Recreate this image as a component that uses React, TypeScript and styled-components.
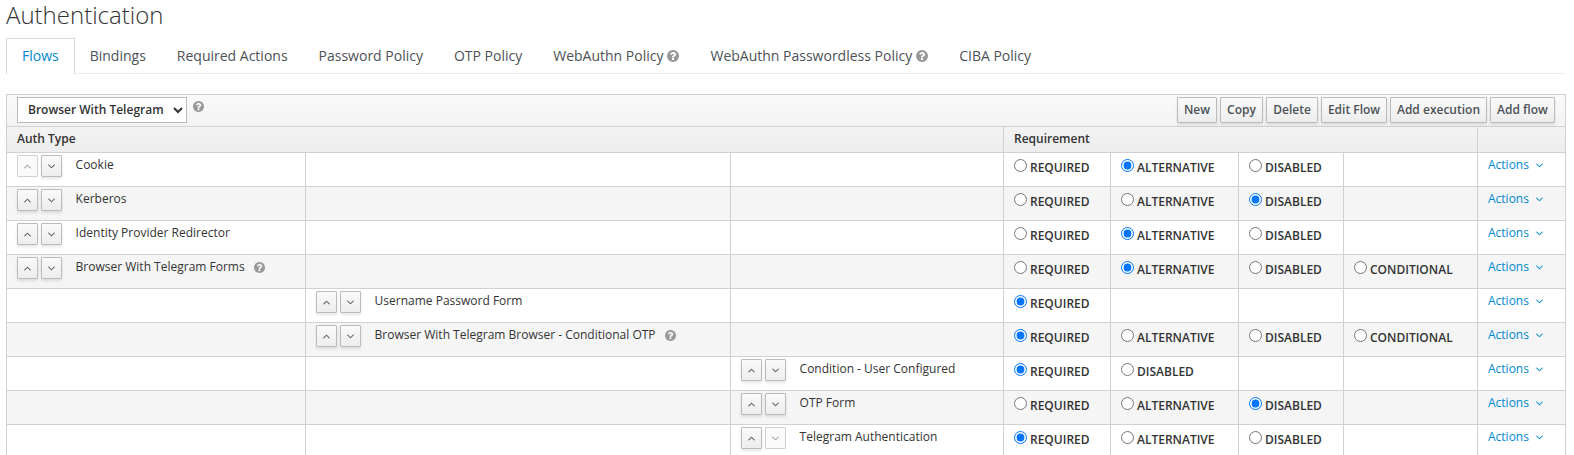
import React from 'react';
import styled, { createGlobalStyle } from 'styled-components';

const GlobalStyle = createGlobalStyle`
  *, *::before, *::after { box-sizing: border-box; }
  html, body { margin: 0; height: 100%; overflow: hidden; background: #fff; }
  body {
    font-family: 'Open Sans', Helvetica, Arial, sans-serif;
    font-size: 12px;
    line-height: 20px;
    color: #333;
  }
`;

const Page = styled.main`
  width: 1560px;
  margin-left: 6px;
`;

const Title = styled.h1`
  margin: 0;
  padding-top: 2px;
  height: 38px;
  font-size: 24px;
  line-height: 26px;
  font-weight: 300;
`;

const Tabs = styled.ul`
  display: flex;
  height: 36px;
  margin: 0 0 20px;
  padding: 0;
  list-style: none;
  border-bottom: 1px solid #ededed;
`;

const Tab = styled.li<{ $active?: boolean }>`
  display: flex;
  align-items: center;
  gap: 4px;
  height: 36px;
  padding: 0 15px 1px;
  font-size: 14px;
  white-space: nowrap;
  color: ${p => (p.$active ? '#0088ce' : '#4d5258')};
  background: ${p => (p.$active ? '#fff' : 'transparent')};
  border: 1px solid ${p => (p.$active ? '#d9d9d9' : 'transparent')};
  border-bottom: 0;

  & + & { margin-left: -1px; }
`;

const HelpSvg = styled.svg<{ $size: number }>`
  flex: none;
  width: ${p => p.$size}px;
  height: ${p => p.$size}px;
  fill: #999;
`;

const HelpIcon = ({ size }: { size: number }) => (
  <HelpSvg $size={size} viewBox="128 128 1536 1536">
    <path d="M1024 1376v-192q0-14-9-23t-23-9h-192q-14 0-23 9t-9 23v192q0 14 9 23t23 9h192q14 0 23-9t9-23zM1280 704q0-88-55.5-163t-138.5-116-170-41q-243 0-371 213-15 24 8 42l132 100q7 6 19 6 16 0 25-12 53-68 86-92 34-24 86-24 48 0 85.5 26t37.5 59q0 38-20 61t-68 45q-63 28-115.5 86.5t-52.5 125.5v36q0 14 9 23t23 9h192q14 0 23-9t9-23q0-19 21.5-49.5t54.5-49.5q32-18 49-28.5t46-35 44.5-48 28-60.5 12.5-81zM1664 896q0 209-103 385.5t-279.5 279.5-385.5 103-385.5-103-279.5-279.5-103-385.5 103-385.5 279.5-279.5 385.5-103 385.5 103 279.5 279.5 103 385.5z" />
  </HelpSvg>
);

const Table = styled.table`
  width: 1560px;
  table-layout: fixed;
  border-collapse: collapse;
  border: 1px solid #d1d1d1;
`;

const Head = styled.thead`
  background: linear-gradient(to bottom, #fafafa 0%, #ededed 100%);
`;

const HeadCell = styled.th`
  height: 26px;
  padding: 0 10px 1px;
  text-align: left;
  font-weight: 600;
  border: 1px solid #d1d1d1;
`;

const ToolbarCell = styled(HeadCell)`
  height: 32px;
  padding: 2px 10px 3px;
`;

const Toolbar = styled.div`
  display: flex;
  justify-content: space-between;
`;

const FlowPicker = styled.div`
  display: flex;
  gap: 6px;
  align-items: flex-start;

  svg { margin-top: 4px; }
`;

const Select = styled.select`
  width: 170px;
  height: 26px;
  padding: 1px 0 3px 6px;
  font: 600 12px/20px 'Open Sans', sans-serif;
  color: #333;
  background: #fff;
  border: 1px solid #bbb;
  border-radius: 0;
`;

const ButtonGroup = styled.div`
  display: flex;
  gap: 3px;
`;

const Button = styled.button<{ $width: number }>`
  width: ${p => p.$width}px;
  height: 26px;
  padding: 0 0 1px;
  font: 600 12px/20px 'Open Sans', sans-serif;
  white-space: nowrap;
  color: #4d5258;
  background: linear-gradient(to bottom, #fafafa 0%, #ededed 100%);
  border: 1px solid #bbb;
  border-radius: 1px;
  box-shadow: 0 2px 3px rgba(3, 3, 3, 0.1);
`;

const Row = styled.tr`
  height: 34px;
  &:nth-child(even) { background: #f5f5f5; }
`;

const Cell = styled.td`
  height: 34px;
  padding: 2px 10px 0;
  vertical-align: top;
  border: 1px solid #d1d1d1;
`;

const Entry = styled.div`
  display: flex;
  align-items: flex-start;
  white-space: nowrap;
`;

const MoveButton = styled.button`
  display: flex;
  align-items: center;
  justify-content: center;
  width: 21px;
  height: 22px;
  margin-right: 3.3px;
  padding: 0;
  color: #4d5258;
  background: linear-gradient(to bottom, #fafafa 0%, #ededed 100%);
  border: 1px solid #bbb;
  border-radius: 1px;
  box-shadow: 0 2px 3px rgba(3, 3, 3, 0.1);

  &:disabled {
    color: #999ca0;
    background: #fafafa;
    border-color: #d1d1d1;
    box-shadow: none;
  }
`;

const EntryName = styled.span`
  margin: 0 9.5px 0 10px;
`;

const EntryHelp = styled.span`
  display: flex;
  padding-top: 5px;
`;

const Option = styled.label`
  display: flex;
  align-items: flex-start;
  gap: 3px;
  height: 24px;
  font-weight: 600;
  white-space: nowrap;
`;

const Radio = styled.input`
  flex: none;
  width: 13px;
  height: 13px;
  margin: 4px 0 0;
`;

const OptionText = styled.span`
  padding-top: 3px;
`;

const ActionsLink = styled.a`
  display: flex;
  align-items: center;
  gap: 7.5px;
  color: #0088ce;
`;

const Chevron = ({ up }: { up?: boolean }) => (
  <svg width="7" height="5" viewBox="373.5 582 1045 747" fill="currentColor">
    <path
      transform={up ? 'rotate(180 896 955.5)' : undefined}
      d="M1395 736q0 13-10 23l-466 466q-10 10-23 10t-23-10l-466-466q-10-10-10-23t10-23l50-50q10-10 23-10t23 10l393 393 393-393q10-10 23-10t23 10l50 50q10 10 10 23z"
    />
  </svg>
);

const tabs = [
  { label: 'Flows', active: true },
  { label: 'Bindings' },
  { label: 'Required Actions' },
  { label: 'Password Policy' },
  { label: 'OTP Policy' },
  { label: 'WebAuthn Policy', help: true },
  { label: 'WebAuthn Passwordless Policy', help: true },
  { label: 'CIBA Policy' },
];

const toolbarButtons: [string, number][] = [
  ['New', 40],
  ['Copy', 43],
  ['Delete', 52],
  ['Edit Flow', 66],
  ['Add execution', 97],
  ['Add flow', 65],
];

const columnWidths = [299, 425, 273, 107, 128, 105, 134, 88];

const BASE = ['REQUIRED', 'ALTERNATIVE', 'DISABLED'];
const WITH_CONDITIONAL = [...BASE, 'CONDITIONAL'];

interface Execution {
  name: string;
  level: number;
  options: string[];
  value: string;
  help?: boolean;
  first?: boolean;
  last?: boolean;
}

const executions: Execution[] = [
  { name: 'Cookie', level: 0, options: BASE, value: 'ALTERNATIVE', first: true },
  { name: 'Kerberos', level: 0, options: BASE, value: 'DISABLED' },
  { name: 'Identity Provider Redirector', level: 0, options: BASE, value: 'ALTERNATIVE' },
  { name: 'Browser With Telegram Forms', level: 0, options: WITH_CONDITIONAL, value: 'ALTERNATIVE', help: true },
  { name: 'Username Password Form', level: 1, options: ['REQUIRED'], value: 'REQUIRED' },
  { name: 'Browser With Telegram Browser - Conditional OTP', level: 1, options: WITH_CONDITIONAL, value: 'REQUIRED', help: true },
  { name: 'Condition - User Configured', level: 2, options: ['REQUIRED', 'DISABLED'], value: 'REQUIRED' },
  { name: 'OTP Form', level: 2, options: BASE, value: 'DISABLED' },
  { name: 'Telegram Authentication', level: 2, options: BASE, value: 'REQUIRED', last: true },
];

const ExecutionRow = ({ item }: { item: Execution }) => (
  <Row>
    {[0, 1, 2].map(level => (
      <Cell key={level}>
        {level === item.level && (
          <Entry>
            <MoveButton disabled={item.first}><Chevron up /></MoveButton>
            <MoveButton disabled={item.last}><Chevron /></MoveButton>
            <EntryName>{item.name}</EntryName>
            {item.help && <EntryHelp><HelpIcon size={11} /></EntryHelp>}
          </Entry>
        )}
      </Cell>
    ))}
    {[0, 1, 2, 3].map(i => (
      <Cell key={i}>
        {item.options[i] && (
          <Option>
            <Radio type="radio" name={item.name} defaultChecked={item.options[i] === item.value} />
            <OptionText>{item.options[i]}</OptionText>
          </Option>
        )}
      </Cell>
    ))}
    <Cell>
      <ActionsLink>Actions <Chevron /></ActionsLink>
    </Cell>
  </Row>
);

export default function App() {
  return (
    <Page>
      <GlobalStyle />
      <Title>Authentication</Title>
      <Tabs>
        {tabs.map(t => (
          <Tab key={t.label} $active={t.active}>
            {t.label}
            {t.help && <HelpIcon size={12} />}
          </Tab>
        ))}
      </Tabs>
      <Table>
        <colgroup>
          {columnWidths.map((w, i) => <col key={i} style={{ width: w }} />)}
        </colgroup>
        <Head>
          <tr>
            <ToolbarCell colSpan={8}>
              <Toolbar>
                <FlowPicker>
                  <Select defaultValue="Browser With Telegram">
                    <option>Browser With Telegram</option>
                  </Select>
                  <HelpIcon size={11} />
                </FlowPicker>
                <ButtonGroup>
                  {toolbarButtons.map(([label, width]) => (
                    <Button key={label} $width={width}>{label}</Button>
                  ))}
                </ButtonGroup>
              </Toolbar>
            </ToolbarCell>
          </tr>
          <tr>
            <HeadCell colSpan={3}>Auth Type</HeadCell>
            <HeadCell colSpan={4}>Requirement</HeadCell>
            <HeadCell />
          </tr>
        </Head>
        <tbody>
          {executions.map(item => <ExecutionRow key={item.name} item={item} />)}
        </tbody>
      </Table>
    </Page>
  );
}
